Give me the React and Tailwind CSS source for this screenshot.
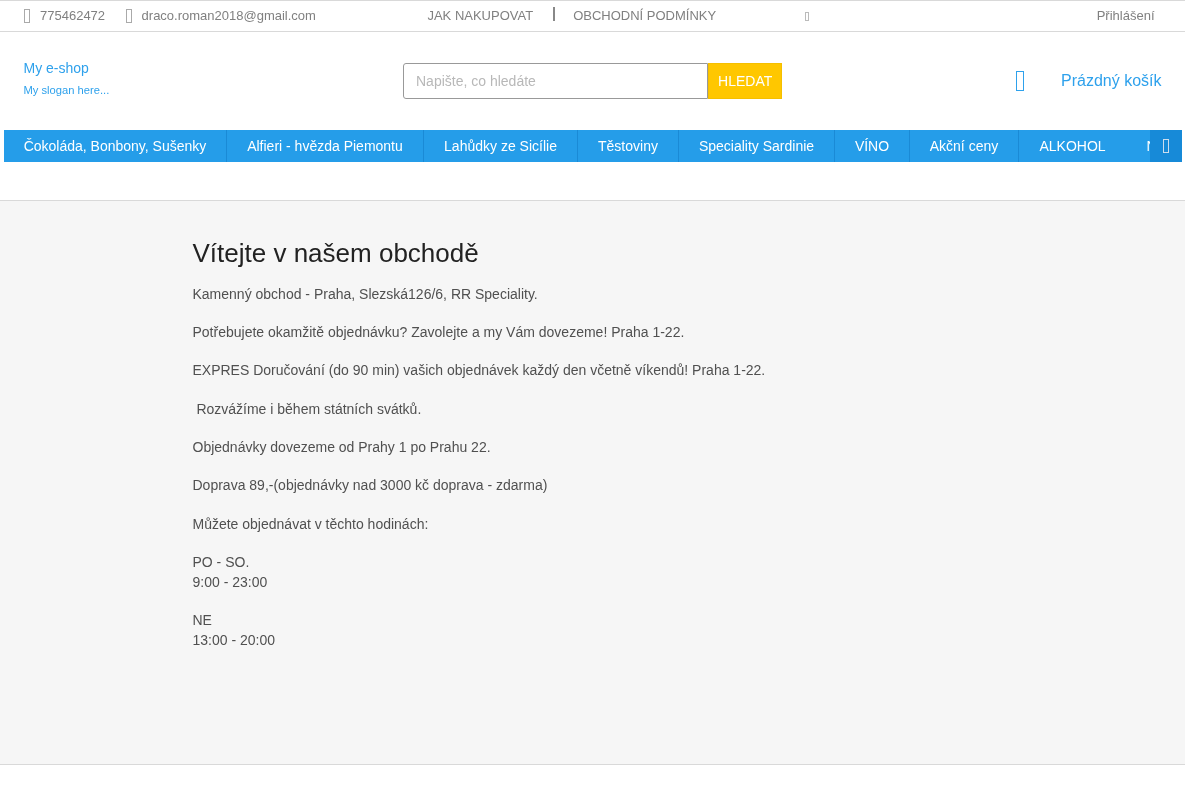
const nav = [
  ["Čokoláda, Bonbony, Sušenky", "w-[223px] border-r"],
  ["Alfieri - hvězda Piemontu", "w-[197px] border-r"],
  ["Lahůdky ze Sicílie", "w-[154px] border-r"],
  ["Těstoviny", "w-[101px] border-r"],
  ["Speciality Sardinie", "w-[156px] border-r"],
  ["VÍNO", "w-[75px] border-r"],
  ["Akční ceny", "w-[109px] border-r"],
  ["ALKOHOL", "w-[107px]"],
];

const paragraphs = [
  ["Kamenný obchod - Praha, Slezská126/6, RR Speciality."],
  ["Potřebujete okamžitě objednávku? Zavolejte a my Vám dovezeme! Praha 1-22."],
  ["EXPRES Doručování (do 90 min) vašich objednávek každý den včetně víkendů! Praha 1-22."],
  ["\u00a0Rozvážíme i během státních svátků."],
  ["Objednávky dovezeme od Prahy 1 po Prahu 22."],
  ["Doprava 89,-(objednávky nad 3000 kč doprava - zdarma)"],
  ["Můžete objednávat v těchto hodinách:"],
  ["PO - SO.", "9:00 - 23:00"],
  ["NE", "13:00 - 20:00"],
];

// icon font is missing on the page, so every icon shows as an empty box
const Tofu = ({ className }) => <span className={`block border ${className}`} />;

export default function App() {
  return (
    <div className="w-[1185px] min-h-[800px] [will-change:transform] font-['Liberation_Sans',Arial,sans-serif] text-[14px] text-[#505050]">
      {/* top bar */}
      <div className="h-[32px] border-y border-[#d9d9d9] flex items-center text-[13px] text-[#808080]">
        <Tofu className="ml-[24px] w-[6px] h-[14px] border-[#aaa]" />
        <span className="ml-[10px]">775462472</span>
        <Tofu className="ml-[21px] w-[6px] h-[14px] border-[#aaa]" />
        <span className="ml-[9.5px]">draco.roman2018@gmail.com</span>
        <span className="ml-[111.5px]">JAK NAKUPOVAT</span>
        <span className="ml-[20px] mb-[4px] w-[2px] h-[14px] bg-[#888]" />
        <span className="ml-[18px]">OBCHODNÍ PODMÍNKY</span>
        <Tofu className="ml-[89px] w-[4px] h-[9px] border-[#bbb]" />
        <span className="ml-auto mr-[30.5px]">Přihlášení</span>
      </div>

      {/* header */}
      <div className="h-[98px] flex items-center">
        <div className="ml-[23.5px] mb-[4px] w-[379.5px] text-[#2ea1ec]">
          <div className="text-[14px] leading-[20px]">My e-shop</div>
          <div className="mt-[2px] text-[11.2px] leading-[20px]">My slogan here...</div>
        </div>
        <div className="flex h-[36px] w-[379px]">
          <div className="flex-1 flex items-center pl-[12px] border border-[#999] rounded-l-[3px] text-[#b8b8b8]">Napište, co hledáte</div>
          <div className="w-[73.6px] flex items-center justify-center bg-[#ffc700] border border-[#f5bf00] text-white">HLEDAT</div>
        </div>
        <Tofu className="ml-[234px] w-[8px] h-[20px] border-[#2ea1ec]" />
        <span className="ml-[37px] text-[16px] text-[#2ea1ec]">Prázdný košík</span>
      </div>

      {/* category menu */}
      <div className="relative ml-[4px] w-[1178px] h-[32px] flex overflow-hidden bg-[#259de9] text-white">
        {nav.map(([label, width]) => (
          <div key={label} className={`${width} shrink-0 flex items-center justify-center border-[#1a8ad6]`}>
            {label}
          </div>
        ))}
        <div className="shrink-0 pl-[20.5px] flex items-center">Nápoje</div>
        <div className="absolute right-0 top-0 w-[32px] h-full flex items-center justify-center bg-[#178ad8]">
          <Tofu className="w-[6px] h-[14px] border-[#cde]" />
        </div>
      </div>

      {/* content */}
      <div className="mt-[38px] h-[565px] border-y border-[#d9d9d9] bg-[#f6f6f6] pl-[192.5px] pt-[35px]">
        <h1 className="text-[26px] leading-[34px] text-[#222]">Vítejte v našem obchodě</h1>
        <div className="mt-[14.9px]">
          {paragraphs.map((lines) => (
            <p key={lines[0]} className="mb-[18.55px] leading-[19.75px]">
              {lines.map((line) => (
                <span key={line} className="block">{line}</span>
              ))}
            </p>
          ))}
        </div>
      </div>
    </div>
  );
}
